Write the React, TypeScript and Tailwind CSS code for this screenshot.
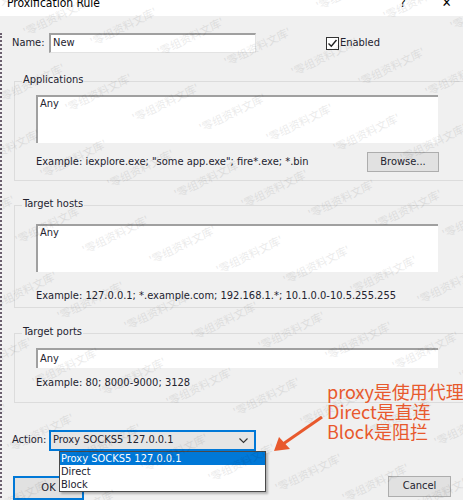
import React from "react";

const font = { fontFamily: '"DejaVu Sans Condensed", "DejaVu Sans", "Liberation Sans", sans-serif' };

function Group({ label, children, className }: { label: string; children: React.ReactNode; className?: string }) {
  return (
    <div className={"ml-[12px] border border-[#dcdcdc] border-r-0 " + (className ?? "")}>
      <div className="-mt-[9px] ml-[7px] h-[14px] w-max bg-[#f0f0f0] px-[1px] text-[11px] leading-[14px]">{label}</div>
      {children}
    </div>
  );
}

function Watermark() {
  const marks: { x: number; y: number }[] = [];
  for (let j = -2; j < 10; j++) {
    for (let i = -3; i < 10; i++) {
      const x = 20 + i * 67 - j * 25;
      const y = 10 + i * 10 + j * 66;
      if (x > -80 && x < 470 && y > -30 && y < 510) marks.push({ x, y });
    }
  }
  return (
    <div aria-hidden="true" className="pointer-events-none absolute inset-0 overflow-hidden">
      {marks.map((m, k) => (
        <div
          key={k}
          className="absolute whitespace-nowrap text-[11px] leading-[12px] text-black opacity-[0.08]"
          style={{ left: m.x, top: m.y, transform: "rotate(-26deg)", fontFamily: '"Noto Sans CJK SC", sans-serif' }}
        >
          '零组资料文库'
        </div>
      ))}
    </div>
  );
}

export default function App() {
  return (
    <div className="relative h-[500px] w-[463px] overflow-hidden bg-[#f0f0f0] text-[#23232f]" style={font}>
      {/* title bar */}
      <div className="flex h-[16px] items-start overflow-hidden bg-white">
        <div className="-mt-[3px] ml-[7px] text-[12px] leading-[12px] text-black">Proxification Rule</div>
        <div className="-mt-[3px] ml-[300px] text-[12px] leading-[12px] text-black">?</div>
        <div className="-mt-[3px] ml-[36px] text-[13px] leading-[12px] text-black">✕</div>
      </div>

      <div className="h-[484px] border-l-2 border-dotted border-[#6b5f6e]">
        {/* Name row */}
        <div className="mt-[17px] flex h-[20px] items-center">
          <div className="w-[47px] pl-[10px] text-[11px]">Name:</div>
          <div className="flex h-[20px] w-[207px] items-center border-l-2 border-t-2 border-[#a0a0a0] border-b border-r border-b-[#e3e3e3] border-r-[#e3e3e3] bg-white pl-[2px] text-[11px]">
            New
          </div>
          <div className="ml-[70px] flex items-center">
            <div className="flex h-[13px] w-[13px] items-center justify-center border border-[#333] bg-white">
              <svg width="11" height="11" viewBox="0 0 11 11">
                <path d="M1.5 5.5 L4.3 8.3 L9.5 2" fill="none" stroke="#222" strokeWidth="1.4" />
              </svg>
            </div>
            <span className="ml-[1px] text-[11px]">Enabled</span>
          </div>
        </div>

        {/* Applications */}
        <Group label="Applications" className="mt-[28px]">
          <div className="ml-[21px] mt-[8px] h-[48px] w-[402px] border-l-2 border-t-2 border-[#a0a0a0] bg-white pl-[2px] text-[11px] leading-[14px]">
            Any
          </div>
          <div className="mt-[9px] flex h-[20px] items-center">
            <div className="ml-[21px] text-[11px]">Example: iexplore.exe; "some app.exe"; fire*.exe; *.bin</div>
            <div className="ml-auto mr-[24px] flex h-[20px] w-[72px] items-center justify-center border border-[#adadad] bg-[#e1e1e1] text-[11px]">
              Browse...
            </div>
          </div>
          <div className="h-[8px]" />
        </Group>

        {/* Target hosts */}
        <Group label="Target hosts" className="mt-[24px]">
          <div className="ml-[21px] mt-[13px] h-[48px] w-[402px] border-l-2 border-t-2 border-[#a0a0a0] bg-white pl-[2px] text-[11px] leading-[14px]">
            Any
          </div>
          <div className="mt-[14px] flex h-[20px] items-center">
            <div className="ml-[21px] text-[11px]">Example: 127.0.0.1; *.example.com; 192.168.1.*; 10.1.0.0-10.5.255.255</div>
          </div>
          <div className="h-[1px]" />
        </Group>

        {/* Target ports */}
        <Group label="Target ports" className="mt-[25px]">
          <div className="ml-[21px] mt-[9px] flex h-[20px] w-[402px] items-center border-l-2 border-t-2 border-[#a0a0a0] bg-white pl-[2px] text-[11px]">
            Any
          </div>
          <div className="mt-[5px] flex h-[20px] items-center">
            <div className="ml-[21px] text-[11px]">Example: 80; 8000-9000; 3128</div>
          </div>
          <div className="h-[9px]" />
        </Group>

        {/* Action row */}
        <div className="mt-[27px] flex h-[21px] items-center">
          <div className="w-[47px] pl-[10px] text-[11px]">Action:</div>
          <div className="flex h-[21px] w-[207px] items-center border-2 border-[#0078d7] bg-[#e5e5e5] pl-[2px] text-[11px]">
            <span>Proxy SOCKS5 127.0.0.1</span>
            <svg className="ml-auto mr-[6px]" width="9" height="6" viewBox="0 0 9 6">
              <path d="M0.5 0.5 L4.5 4.5 L8.5 0.5" fill="none" stroke="#333" strokeWidth="1.1" />
            </svg>
          </div>
        </div>

        {/* Buttons */}
        <div className="mt-[25px] flex">
          <div className="ml-[11px] flex h-[24px] w-[71px] items-center justify-center border-2 border-[#0078d7] bg-[#e1e1e1] text-[11px]">OK</div>
          <div className="ml-auto mr-[12px] flex h-[21px] w-[63px] items-center justify-center border border-[#adadad] bg-[#e1e1e1] text-[11px]">Cancel</div>
        </div>
      </div>

      {/* dropdown list overlay */}
      <div className="absolute left-[59px] top-[451px] w-[207px] border border-[#4a4a4a] bg-white text-[11px] leading-[13px] shadow-[2px_2px_2px_rgba(0,0,0,0.25)]">
        <div className="bg-[#0078d7] pl-[1px] text-white">Proxy SOCKS5 127.0.0.1</div>
        <div className="pl-[1px]">Direct</div>
        <div className="pl-[1px]">Block</div>
      </div>

      <Watermark />

      {/* annotation */}
      <div
        className="absolute left-[327px] top-[381px] whitespace-nowrap text-[18px] leading-[20px] text-[#e8592d]"
        style={{ fontFamily: '"Noto Sans CJK SC", "Noto Sans", sans-serif' }}
      >
        <div>proxy是使用代理</div>
        <div>Direct是直连</div>
        <div>Block是阻拦</div>
      </div>
      <svg className="absolute left-0 top-0" width="463" height="500" viewBox="0 0 463 500">
        <line x1="322" y1="417" x2="283" y2="444" stroke="#e8592d" strokeWidth="3" />
        <polygon points="274,451 279,437 290,449" fill="#e8592d" />
      </svg>
    </div>
  );
}
